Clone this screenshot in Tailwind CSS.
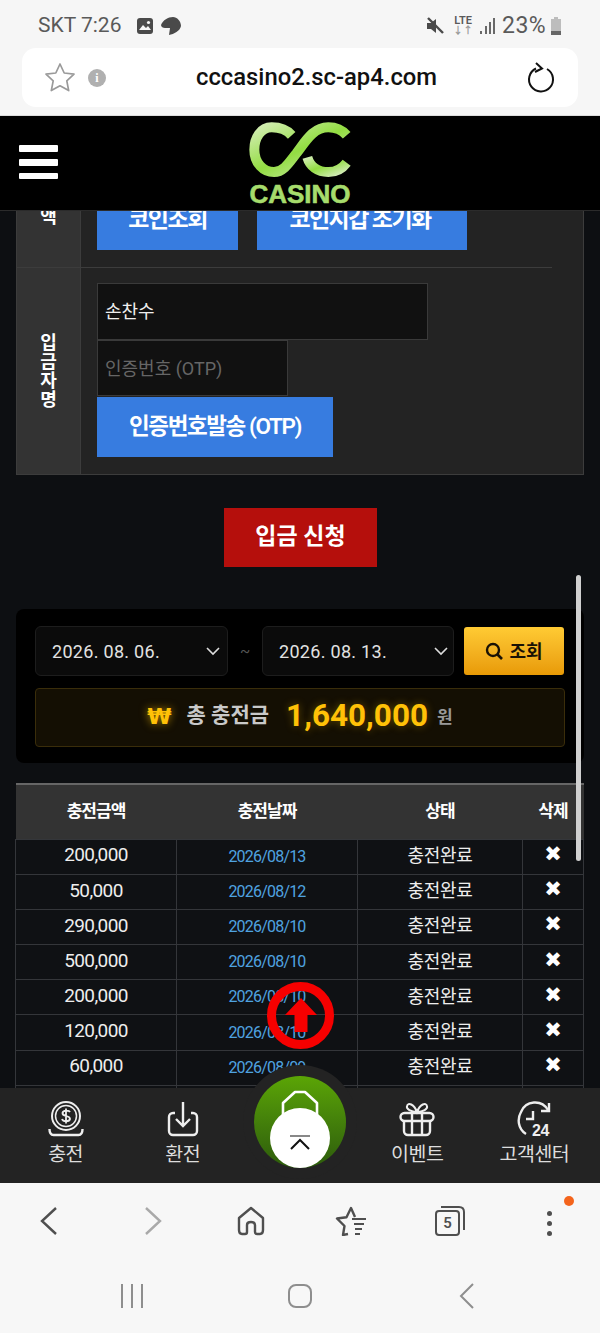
<!DOCTYPE html>
<html lang="ko">
  <head>
    <meta charset="UTF-8" />
    <meta name="viewport" content="width=device-width, initial-scale=1.0" />
    <title>CC Casino</title>
    <script src="https://cdn.jsdelivr.net/npm/@tailwindcss/browser@4"></script>
  </head>
  <body class="bg-[#f6f6f6]">
    <div class="flex flex-col h-[1333px] w-[600px] overflow-hidden relative font-['Roboto','Noto_Sans_CJK_KR',sans-serif]">
      <!-- phone status bar + url bar -->
      <div class="h-[116px] shrink-0 bg-[#f6f6f6] border-b border-[#ddd]">
        <div class="h-[48px] pt-[4px] flex items-center justify-between pl-[38px] pr-[37px] text-[#5a5a5a]">
          <div class="flex items-center text-[21px]">
            <span>SKT 7:26</span>
            <svg width="18" height="18" viewBox="0 0 18 18" class="ml-[15px]"><rect x="1" y="1" width="16" height="16" rx="3" fill="#4a4a4a" /><circle cx="12.5" cy="5.5" r="1.6" fill="#f6f6f6" /><path d="M3 13l4-5 3 3 2-2 3 4z" fill="#f6f6f6" /></svg>
            <svg width="22" height="20" viewBox="0 0 22 20" class="ml-[6px]"><path d="M13 1C8 1 3 4 1 9c0 2 2 3 4 3h5l-1 7c5-1 11-4 12-9 0-5-4-9-8-9z" fill="#4a4a4a" /></svg>
          </div>
          <div class="flex items-center text-[23px]">
            <svg width="20" height="20" viewBox="0 0 20 20" class="mr-[8px]"><path d="M2 7h4l5-4v14l-5-4H2z" fill="#4a4a4a" /><path d="M3 2l15 15" stroke="#4a4a4a" stroke-width="2.4" /></svg>
            <div class="flex flex-col items-center leading-[10px] text-[11px] font-semibold mr-[6px]">
              <span>LTE</span><span class="text-[#999] text-[10px]">↓↑</span>
            </div>
            <svg width="17" height="18" viewBox="0 0 17 18" class="mr-[6px]"><path d="M2 17v-3M7 17V9M11 17V5M15 17V1" stroke="#5a5a5a" stroke-width="1.8" /></svg>
            <span class="tracking-[0.400px]">23%</span>
            <svg width="14" height="20" viewBox="0 0 14 20" class="ml-[3px]"><path d="M5 1h4v2h3v16H2V3h3z" fill="#bdbdbd" /><rect x="2" y="15" width="10" height="4" fill="#666" /></svg>
          </div>
        </div>
        <div class="mx-[22px] h-[59px] rounded-[14px] bg-white flex items-center relative">
          <svg width="32" height="31" viewBox="0 0 32 31" class="ml-[22px]"><path d="M16 2l4.2 9 9.8 1.2-7.2 6.7 1.9 9.7L16 23.800l-8.700 4.800 1.900-9.700L2 12.200 11.800 11z" fill="none" stroke="#9a9a9a" stroke-width="1.700" stroke-linejoin="round" /></svg>
          <span class="ml-[12px] size-[18px] rounded-full bg-[#b0b0b0] text-white text-[12px] font-bold flex items-center justify-center font-['Liberation_Serif',serif]">i</span>
          <span class="ml-[90px] text-[23.800px] font-medium text-[#111]">cccasino2.sc-ap4.com</span>
          <svg width="30" height="32" viewBox="0 0 30 32" class="absolute left-[503px] top-[13px]"><path d="M11 7.500A12 12 0 1 0 22 8" fill="none" stroke="#111" stroke-width="2" /><path d="M11 2l6 5.500-7 3.500" fill="none" stroke="#111" stroke-width="2" /></svg>
        </div>
      </div>

      <!-- site header -->
      <header class="h-[95px] shrink-0 bg-black border-b border-[#2b2b2b] relative z-10 flex justify-center">
        <div class="absolute left-[19px] top-[29px] w-[39px] flex flex-col gap-[7px]">
          <span class="h-[7px] bg-white rounded-[1px]"></span>
          <span class="h-[7px] bg-white rounded-[1px]"></span>
          <span class="h-[6px] bg-white rounded-[1px]"></span>
        </div>
        <div class="flex flex-col items-center w-[110px] pt-[6px]">
          <svg width="102" height="55" viewBox="57 12 306 165">
            <defs>
              <linearGradient id="cc" x1="0" y1="0" x2="1" y2="1">
                <stop offset="0" stop-color="#d3edb3" />
                <stop offset="0.5" stop-color="#93dd42" />
                <stop offset="1" stop-color="#d3ecb8" />
              </linearGradient>
            </defs>
            <path d="M185 52C170 35 150 28 125 28 92 28 73 60 73 95c0 40 27 67 59 67 30 0 48-32 68-57 28-37 50-77 95-77 25 0 43 10 55 24" fill="none" stroke="url(#cc)" stroke-width="30" />
            <path d="M232 118c8 27 30 44 63 44 23 0 43-12 55-28" fill="none" stroke="url(#cc)" stroke-width="30" />
          </svg>
          <span class="text-[26px] leading-[19px] font-bold text-[#a6dc6c] [-webkit-text-stroke:0.6px_#a6dc6c] font-['Liberation_Sans',sans-serif] mt-[8px]">CASINO</span>
        </div>
      </header>

      <!-- page content (scrolled) -->
      <main class="flex-1 overflow-hidden bg-[#0d0f12] relative">
        <div class="-mt-[65px]">
          <!-- form table -->
          <section class="mx-4 border border-[#3c3c3c] bg-[#232323] text-white">
            <div class="flex h-[121px]">
              <div class="w-[64px] shrink-0 bg-[#333] border-r border-b border-[#3c3c3c] flex items-center justify-center">
                <span class="w-[20px] text-[18px] leading-[19px] font-bold text-center break-all">금액</span>
              </div>
              <div class="flex-1 pl-4">
                <div class="flex gap-[19px] pt-[43px]">
                  <button class="w-[141px] h-[60px] bg-[#377ce0] text-[23px] font-semibold tracking-[-1.500px]">코인조회</button>
                  <button class="w-[210px] h-[60px] pr-[4px] bg-[#377ce0] text-[23px] font-semibold tracking-[-1.600px]">코인지갑 초기화</button>
                </div>
                <div class="w-[471px] -ml-4 mt-[17px] border-b border-[#3c3c3c]"></div>
              </div>
            </div>
            <div class="flex h-[206px]">
              <div class="w-[64px] shrink-0 bg-[#333] border-r border-[#3c3c3c] flex items-center justify-center">
                <span class="w-[20px] text-[18px] leading-[19px] font-bold text-center break-all">입금자명</span>
              </div>
              <div class="flex-1 pl-4 pt-[15px] flex flex-col items-start">
                <div class="w-[331px] h-[57px] bg-[#111] border border-[#3a3a3a] pl-[7px] flex items-center text-[18px] text-[#eee]">손찬수</div>
                <div class="w-[191px] h-[56px] bg-[#111] border border-[#3a3a3a] pl-[7px] flex items-center text-[18px] text-[#666]">인증번호 (OTP)</div>
                <button class="w-[236px] h-[60px] mt-[1px] bg-[#377ce0] text-[22.500px] font-semibold tracking-[-1.400px]">인증번호발송 (OTP)</button>
              </div>
            </div>
          </section>

          <div class="mt-[33px] flex justify-center">
            <button class="w-[153px] h-[59px] ml-[1px] bg-[#b50f0c] text-white text-[23px] font-bold">입금 신청</button>
          </div>

          <!-- date search -->
          <section class="mx-4 mt-[42px] h-[154px] bg-black rounded-lg pl-[19px] pt-[17px]">
            <div class="flex items-start">
              <div class="w-[193px] h-[50px] bg-[#0b0b0b] border border-[#1d1d1d] rounded-md pl-[16px] pr-[6px] flex items-center justify-between text-[18px] text-[#e2e2e2] tracking-[0.300px]">
                <span>2026. 08. 06.</span>
                <svg width="16" height="10" viewBox="0 0 16 10"><path d="M2 2l6 6 6-6" fill="none" stroke="#ddd" stroke-width="1.600" /></svg>
              </div>
              <span class="w-[34px] h-[50px] flex items-center justify-center text-[#555] text-[15px]">~</span>
              <div class="w-[192px] h-[50px] bg-[#0b0b0b] border border-[#1d1d1d] rounded-md pl-[16px] pr-[4px] flex items-center justify-between text-[18px] text-[#e2e2e2] tracking-[0.300px]">
                <span>2026. 08. 13.</span>
                <svg width="16" height="10" viewBox="0 0 16 10"><path d="M2 2l6 6 6-6" fill="none" stroke="#ddd" stroke-width="1.600" /></svg>
              </div>
              <button class="w-[100px] h-[48px] mt-[1px] ml-[10px] rounded-[3px] bg-linear-to-b from-[#ffcb33] to-[#e89a05] flex items-center justify-center gap-[6px] text-[18px] font-bold text-[#1a1205]">
                <svg width="18" height="18" viewBox="0 0 18 18"><circle cx="8" cy="8" r="6" fill="none" stroke="#1a1205" stroke-width="2.400" /><path d="M12.500 12.500l4.500 4.500" stroke="#1a1205" stroke-width="2.600" /></svg>
                <span>조회</span>
              </button>
            </div>
            <div class="w-[530px] h-[59px] mt-[12px] pb-[3px] rounded-[4px] border border-[#3a2d0a] bg-[#140f03] flex items-center justify-center">
              <span class="text-[22px] font-bold text-[#ffc107] [text-shadow:0_0_8px_rgba(255,193,7,0.6)] font-['DejaVu_Sans',sans-serif] mr-[15px]">₩</span>
              <span class="text-[21px] font-semibold text-[#c9c9c9] mr-[17px]">총 충전금</span>
              <span class="text-[31.500px] font-bold text-[#ffc107] [text-shadow:0_0_8px_rgba(255,193,7,0.35)] mr-[9px]">1,640,000</span>
              <span class="text-[17px] font-semibold text-[#999] mt-[3px]">원</span>
            </div>
          </section>

          <!-- charge history -->
          <table class="ml-[15px] mt-[20px] w-[568px] table-fixed border-collapse text-[#eee]">
            <colgroup>
              <col class="w-[161px]" />
              <col class="w-[181px]" />
              <col class="w-[165px]" />
              <col class="w-[61px]" />
            </colgroup>
            <thead>
              <tr class="h-[55px] bg-[#333] border-t-2 border-[#666] text-[17px] text-white tracking-[-1px]">
                <th class="font-bold">충전금액</th>
                <th class="font-bold">충전날짜</th>
                <th class="font-bold">상태</th>
                <th class="font-bold">삭제</th>
              </tr>
            </thead>
            <tbody id="rows"></tbody>
          </table>
        </div>

        <!-- scrollbar -->
        <div class="absolute left-[576px] top-[364px] w-[5px] h-[286px] rounded-full bg-[#d0d0d0]"></div>

        <!-- scroll to top -->
        <div class="absolute left-[267px] top-[771px] size-[67px] rounded-full border-[9px] border-[#f60000] flex items-center justify-center">
          <svg width="34" height="34" viewBox="0 0 34 34" class="shrink-0 -mt-[2px]"><path d="M17 0l16 17H23.500v17h-13V17H1z" fill="#f60000" /></svg>
        </div>
      </main>

      <!-- bottom menu -->
      <nav class="h-[95px] shrink-0 bg-[#232323] relative z-10 grid grid-cols-5 px-[7px] text-[19.500px] text-[#ddd] tracking-[-0.500px]">
        <div class="flex flex-col items-center pt-[13px]">
          <svg width="36" height="36" viewBox="0 0 36 36" fill="none" stroke="#eee" stroke-width="2"><circle cx="18" cy="15" r="14" /><circle cx="18" cy="15" r="10.500" stroke-width="1.500" /><path d="M1.500 28c0 4 1.500 6 4 6h25c2.500 0 4-2 4-6" stroke-width="2.400" /><path d="M22 11c-1-2-7-2-7.500 1-.5 4 8 2 7.500 6-.5 3-7 3-8 0M18 7.500v15" stroke-width="1.800" /></svg>
          <span class="mt-[6px] leading-[24px]">충전</span>
        </div>
        <div class="flex flex-col items-center pt-[13px]">
          <svg width="36" height="36" viewBox="0 0 36 36" fill="none" stroke="#eee" stroke-width="2.400"><path d="M10 12H8a4 4 0 0 0-4 4v14a4 4 0 0 0 4 4h20a4 4 0 0 0 4-4V16a4 4 0 0 0-4-4h-2" /><path d="M18 1v24M11 18l7 7 7-7" /></svg>
          <span class="mt-[6px] leading-[24px]">환전</span>
        </div>
        <div></div>
        <div class="flex flex-col items-center pt-[13px]">
          <svg width="36" height="36" viewBox="0 0 36 36" fill="none" stroke="#eee" stroke-width="2.400"><rect x="1.500" y="12" width="33" height="8" rx="4" /><path d="M5 20v10a4 4 0 0 0 4 4h18a4 4 0 0 0 4-4V20M13 12v22M23 12v22" /><path d="M18 11c-3-8-9-10-10-6-1 3 4 6 10 6 6 0 11-3 10-6-1-4-7-2-10 6z" stroke-width="2" /></svg>
          <span class="mt-[6px] leading-[24px]">이벤트</span>
        </div>
        <div class="flex flex-col items-center pt-[13px]">
          <svg width="36" height="36" viewBox="0 0 36 36" fill="none" stroke="#eee" stroke-width="2.400"><path d="M32 9A15 15 0 0 0 5 11C1 18 2 28 10 33" /><path d="M33 2v8h-8" /><path d="M17 10v8h-7" /><text x="16" y="35" font-size="16" font-weight="700" fill="#eee" stroke="none" font-family="Liberation Sans, sans-serif">24</text></svg>
          <span class="mt-[6px] leading-[24px] whitespace-nowrap">고객센터</span>
        </div>

        <!-- center button -->
        <div class="absolute left-[243px] -top-[23px] size-[114px] rounded-full bg-[#232323] overflow-hidden">
          <div class="absolute left-[11px] top-[11px] size-[92px] rounded-full bg-linear-to-b from-[#5ba505] to-[#2d5c0b]"></div>
          <svg width="38" height="32" viewBox="0 0 38 32" class="absolute left-[38px] top-[24px]"><path d="M2 28V14L14 3h10l12 11v14" fill="none" stroke="#fff" stroke-width="2.600" stroke-linejoin="round" /></svg>
          <div class="absolute left-[27px] top-[43px] size-[60px] rounded-full bg-white flex flex-col items-center pt-[27px]">
            <span class="w-[20px] h-[1.500px] bg-[#888]"></span>
            <svg width="22" height="12" viewBox="0 0 22 12" class="mt-[1px]"><path d="M2 11l9-9 9 9" fill="none" stroke="#111" stroke-width="2" /></svg>
          </div>
        </div>
      </nav>

      <!-- browser toolbar + system nav -->
      <div class="h-[150px] shrink-0 bg-[#f7f7f7] relative">
        <div class="h-[75px] pt-[23px] flex items-start">
          <svg width="18" height="30" viewBox="0 0 18 30" class="ml-[40px]"><path d="M16 2L2 15l14 13" fill="none" stroke="#4f4f4f" stroke-width="2.400" /></svg>
          <svg width="18" height="30" viewBox="0 0 18 30" class="ml-[86px]"><path d="M2 2l14 13L2 28" fill="none" stroke="#a9a9a9" stroke-width="2.400" /></svg>
          <svg width="28" height="30" viewBox="0 0 28 30" class="ml-[75px]"><path d="M14 2L2 12v12c0 3 1 4 3 4h3c1 0 2-1 2-2v-7c0-4 8-4 8 0v7c0 1 1 2 2 2h3c2 0 3-1 3-4V12z" fill="none" stroke="#4f4f4f" stroke-width="2.400" stroke-linejoin="round" /></svg>
          <svg width="32" height="30" viewBox="0 0 32 30" class="ml-[70px]"><path d="M17 13h14M19 18h10M20 23h7M20 28h5" stroke="#4f4f4f" stroke-width="2" /><path d="M13 28l-5 1 1.500-9L2 12.500l9.500-1.300L16 2l4 9" fill="none" stroke="#4f4f4f" stroke-width="2.400" stroke-linejoin="round" /></svg>
          <div class="ml-[68px] relative w-[30px] h-[30px]">
            <div class="absolute left-[0px] top-[4px] w-[25px] h-[26px] rounded-[4px] border-2 border-[#4f4f4f] flex items-center justify-center text-[15px] font-semibold text-[#4f4f4f]">5</div>
            <svg width="30" height="30" viewBox="0 0 30 30" class="absolute left-0 top-0"><path d="M6 1h18c3 0 5 2 5 5v18" fill="none" stroke="#4f4f4f" stroke-width="2" /></svg>
          </div>
          <div class="ml-[82px] mt-[5px] flex flex-col gap-[5px]">
            <span class="size-[5px] rounded-full bg-[#4f4f4f]"></span>
            <span class="size-[5px] rounded-full bg-[#4f4f4f]"></span>
            <span class="size-[5px] rounded-full bg-[#4f4f4f]"></span>
          </div>
          <span class="absolute left-[564px] top-[13px] size-[10px] rounded-full bg-[#f4641c]"></span>
        </div>
        <div class="h-[75px] pt-[26px] flex items-start">
          <div class="ml-[121px] flex gap-[8px]">
            <span class="w-[2px] h-[24px] bg-[#8e8e8e]"></span>
            <span class="w-[2px] h-[24px] bg-[#8e8e8e]"></span>
            <span class="w-[2px] h-[24px] bg-[#8e8e8e]"></span>
          </div>
          <div class="ml-[145px] size-[24px] rounded-[8px] border-2 border-[#8e8e8e]"></div>
          <svg width="16" height="26" viewBox="0 0 16 26" class="ml-[147px] -mt-[1px]"><path d="M14 1L2 13l12 12" fill="none" stroke="#8e8e8e" stroke-width="2" /></svg>
        </div>
      </div>
    </div>

    <script>
      // charge history rows
      const rows = [
        ["200,000", "2026/08/13"],
        ["50,000", "2026/08/12"],
        ["290,000", "2026/08/10"],
        ["500,000", "2026/08/10"],
        ["200,000", "2026/08/10"],
        ["120,000", "2026/08/10"],
        ["60,000", "2026/08/09"],
        ["100,000", "2026/08/09"],
      ];
      const body = document.getElementById("rows");
      for (const [amount, date] of rows) {
        const tr = document.createElement("tr");
        tr.className = "h-[35.2px] bg-[#0f1114] border border-[#34363a] text-center";
        tr.innerHTML = `
          <td class="border border-[#34363a] text-[19px] tracking-[-0.6px] pb-[2px]">${amount}</td>
          <td class="border border-[#34363a] text-[16px] tracking-[-0.8px] text-[#4fa3e0]">${date}</td>
          <td class="border border-[#34363a] text-[18px] tracking-[-0.3px] pb-[2px]">충전완료</td>
          <td class="border border-[#34363a] text-[21px] leading-[21px] text-white font-['DejaVu_Sans',sans-serif] pb-[4px]">✖</td>`;
        body.appendChild(tr);
      }
    </script>
  </body>
</html>
